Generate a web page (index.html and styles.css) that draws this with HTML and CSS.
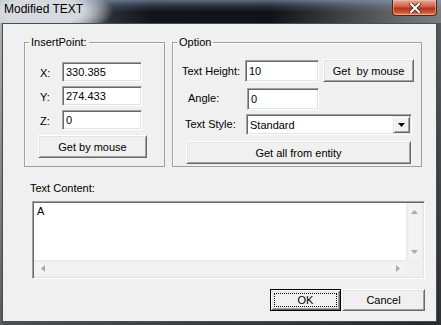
FILE: index.html
```html
<!DOCTYPE html>
<html>
<head>
<meta charset="utf-8">
<link rel="stylesheet" href="styles.css">
</head>
<body>
<div class="window">
  <div class="titlebar">
    <span class="title">Modified TEXT</span>
    <div class="close">
      <svg width="12" height="10" viewBox="0 0 12 10">
        <path d="M2 1 L10 9 M10 1 L2 9" stroke="#3a2a28" stroke-width="3.6" stroke-linecap="square" fill="none"/>
        <path d="M2 1 L10 9 M10 1 L2 9" stroke="#ffffff" stroke-width="2" stroke-linecap="square" fill="none"/>
      </svg>
    </div>
  </div>
  <div class="client">
    <div class="groups">
      <fieldset class="group group-insert">
        <legend>InsertPoint:</legend>
        <div class="insert-body">
          <div class="coord-row"><span class="coord-label">X:</span><input class="edit edit-coord" value="330.385"></div>
          <div class="coord-row"><span class="coord-label">Y:</span><input class="edit edit-coord" value="274.433"></div>
          <div class="coord-row"><span class="coord-label">Z:</span><input class="edit edit-coord" value="0"></div>
          <button class="btn btn-insert">Get by mouse</button>
        </div>
      </fieldset>
      <fieldset class="group group-option">
        <legend>Option</legend>
        <div class="option-body">
          <div class="opt-row row-height">
            <span class="opt-label lbl-height">Text Height:</span>
            <input class="edit edit-height" value="10">
            <button class="btn btn-height">Get&nbsp; by mouse</button>
          </div>
          <div class="opt-row row-angle">
            <span class="opt-label lbl-angle">Angle:</span>
            <input class="edit edit-angle" value="0">
          </div>
          <div class="opt-row row-style">
            <span class="opt-label lbl-style">Text Style:</span>
            <div class="combo">
              <span class="combo-text">Standard</span>
              <span class="combo-btn">
                <svg width="7" height="4" viewBox="0 0 7 4"><polygon points="0,0 7,0 3.5,4" fill="#000"/></svg>
              </span>
            </div>
          </div>
          <div class="opt-row row-all">
            <button class="btn btn-all">Get all from entity</button>
          </div>
        </div>
      </fieldset>
    </div>
    <div class="content-label">Text Content:</div>
    <div class="memo">
      <div class="memo-text">A</div>
      <div class="vscroll">
        <span class="arrow"><svg width="7" height="4" viewBox="0 0 7 4"><polygon points="3.5,0 7,4 0,4" fill="#a8a8a8"/></svg></span>
        <span class="arrow"><svg width="7" height="4" viewBox="0 0 7 4"><polygon points="0,0 7,0 3.5,4" fill="#a8a8a8"/></svg></span>
      </div>
      <div class="hscroll">
        <span class="arrow"><svg width="4" height="7" viewBox="0 0 4 7"><polygon points="4,0 4,7 0,3.5" fill="#a8a8a8"/></svg></span>
        <span class="arrow"><svg width="4" height="7" viewBox="0 0 4 7"><polygon points="0,0 4,3.5 0,7" fill="#a8a8a8"/></svg></span>
      </div>
      <div class="corner"></div>
    </div>
    <div class="dialog-buttons">
      <button class="btn btn-ok"><span class="focus">OK</span></button>
      <button class="btn btn-cancel">Cancel</button>
    </div>
  </div>
</div>
</body>
</html>
```

FILE: styles.css
```css
html, body {
  margin: 0;
  padding: 0;
}
body {
  font-family: "Liberation Sans", Arial, sans-serif;
  font-size: 11px;
  color: #000;
}
.window {
  width: 441px;
  height: 325px;
  display: flex;
  flex-direction: column;
  background:
    linear-gradient(to bottom, rgba(0,0,0,0) 0, rgba(0,0,0,0.5) 100%),
    linear-gradient(to right, #b9bec3 0, #9aa0a5 3px, #4b4f53 436px, #5d6165 441px);
}
.titlebar {
  height: 23px;
  flex: none;
  display: flex;
  align-items: flex-start;
  background:
    radial-gradient(ellipse 72px 24px at 42px 11px, rgba(214,218,222,1) 55%, rgba(214,218,222,0) 100%),
    linear-gradient(to bottom, rgba(140,165,200,0.6) 0, rgba(140,165,200,0.2) 6px, rgba(0,0,0,0) 12px),
    linear-gradient(to right, #c4c9ce 0, #c4c9ce 60px, #2b3036 110px, #121519 150px, #0f1216 270px, #3e4143 340px, #65686a 400px, #7a7d7f 441px);
}
.title {
  font-size: 12px;
  line-height: 15px;
  padding: 2px 0 0 4px;
  color: #000;
}
.close {
  margin-left: auto;
  margin-right: 4px;
  width: 45px;
  height: 16px;
  box-sizing: border-box;
  border: 1px solid #4b2620;
  border-top: none;
  border-radius: 0 0 4px 4px;
  background: linear-gradient(to bottom, #e6a896 0, #d46a52 40%, #b93419 55%, #c9512f 80%, #e08a62 100%);
  box-shadow: inset 0 0 0 1px rgba(255,210,190,0.45);
  display: flex;
  align-items: center;
  justify-content: center;
}
.client {
  flex: 1;
  margin: 0 4px 3px 2px;
  border: 1px solid #4a4e52;
  background: #f0f0f0;
  display: flex;
  flex-direction: column;
}
.groups {
  display: flex;
  gap: 7px;
  margin: 11px 0 0 21px;
  align-items: stretch;
}
.group {
  margin: 0;
  padding: 0;
  min-width: 0;
  box-sizing: border-box;
  border: 1px solid #a0a0a0;
  box-shadow: inset 1px 1px 0 #fff;
}
.group legend {
  margin-left: 4px;
  padding: 0 2px;
  line-height: 14px;
  font-size: 11px;
  background: #f0f0f0;
}
.group-insert { width: 141px; }
.group-option { width: 250px; }

.insert-body {
  padding: 13px 0 8px 15px;
  display: flex;
  flex-direction: column;
  gap: 4px;
}
.coord-row {
  display: flex;
  align-items: center;
  height: 20px;
}
.coord-label {
  width: 22px;
  padding-top: 2px;
}
.edit {
  box-sizing: border-box;
  margin: 0;
  border: 1px solid;
  border-color: #a0a0a0 #fff #fff #a0a0a0;
  box-shadow: inset 1px 1px 0 #696969, inset -1px -1px 0 #e3e3e3;
  background: #fff;
  padding: 0 3px;
  font: inherit;
  color: #000;
  outline: none;
}
.edit-coord { width: 80px; height: 20px; }

.btn {
  box-sizing: border-box;
  margin: 0;
  padding: 0;
  border: 1px solid;
  border-color: #fff #696969 #696969 #fff;
  box-shadow: inset 1px 1px 0 #e3e3e3, inset -1px -1px 0 #a0a0a0;
  background: #f0f0f0;
  font: inherit;
  color: #000;
  display: flex;
  align-items: center;
  justify-content: center;
}
.btn-insert {
  width: 109px;
  height: 23px;
  margin: 1px 0 0 -2px;
}

.option-body {
  padding: 10px 0 2px 0;
  display: flex;
  flex-direction: column;
}
.opt-row {
  display: flex;
  align-items: center;
}
.row-height { height: 23px; }
.row-angle { height: 22px; margin-top: 6px; }
.row-style { height: 21px; margin-top: 4px; }
.row-all { height: 23px; margin-top: 6px; }

.lbl-height { margin-left: 9px; width: 63px; }
.lbl-angle { margin-left: 15px; width: 59px; margin-top: -2px; }
.lbl-style { margin-left: 12px; width: 61px; margin-top: -1px; }

.edit-height { width: 74px; height: 22px; }
.edit-angle { width: 72px; height: 22px; }
.btn-height {
  width: 91px;
  height: 23px;
  margin-left: 4px;
}
.btn-all {
  width: 225px;
  height: 23px;
  margin-left: 13px;
}

.combo {
  box-sizing: border-box;
  width: 166px;
  height: 21px;
  border: 1px solid;
  border-color: #a0a0a0 #fff #fff #a0a0a0;
  box-shadow: inset 1px 1px 0 #696969, inset -1px -1px 0 #e3e3e3;
  background: #fff;
  padding: 1px;
  display: flex;
  align-items: stretch;
}
.combo-text {
  flex: 1;
  padding-left: 2px;
  display: flex;
  align-items: center;
}
.combo-btn {
  width: 17px;
  box-sizing: border-box;
  border: 1px solid;
  border-color: #e3e3e3 #696969 #696969 #e3e3e3;
  box-shadow: inset 1px 1px 0 #fff, inset -1px -1px 0 #a0a0a0;
  background: #f0f0f0;
  display: flex;
  align-items: center;
  justify-content: center;
}

.content-label {
  margin: 14px 0 0 27px;
  line-height: 14px;
}
.memo {
  box-sizing: border-box;
  height: 78px;
  margin: 6px 11px 0 29px;
  border: 1px solid;
  border-color: #a0a0a0 #fff #fff #a0a0a0;
  box-shadow: inset 1px 1px 0 #696969, inset -1px -1px 0 #e3e3e3;
  background: #fff;
  padding: 1px;
  display: grid;
  grid-template-columns: 1fr 17px;
  grid-template-rows: 1fr 17px;
}
.memo-text {
  padding: 1px 3px;
  line-height: 14px;
}
.vscroll {
  background: linear-gradient(to right, #e8e8e8 0, #f3f3f3 3px, #f3f3f3 14px, #ececec 17px);
  display: flex;
  flex-direction: column;
  justify-content: space-between;
}
.hscroll {
  background: linear-gradient(to bottom, #e8e8e8 0, #f3f3f3 3px, #f3f3f3 14px, #ececec 17px);
  display: flex;
  justify-content: space-between;
}
.arrow {
  width: 17px;
  height: 17px;
  display: flex;
  align-items: center;
  justify-content: center;
}
.corner {
  background: #f0f0f0;
}
.dialog-buttons {
  display: flex;
  justify-content: flex-end;
  gap: 1px;
  margin: 10px 11px 0 0;
}
.btn-ok {
  width: 71px;
  height: 22px;
  border: 1px solid #000;
  box-shadow: inset 1px 1px 0 #fff, inset -1px -1px 0 #696969, inset 2px 2px 0 #e3e3e3, inset -2px -2px 0 #a0a0a0;
  padding: 3px;
  align-items: stretch;
}
.focus {
  flex: 1;
  border: 1px dotted #000;
  display: flex;
  align-items: center;
  justify-content: center;
}
.btn-cancel {
  width: 83px;
  height: 22px;
}
```
